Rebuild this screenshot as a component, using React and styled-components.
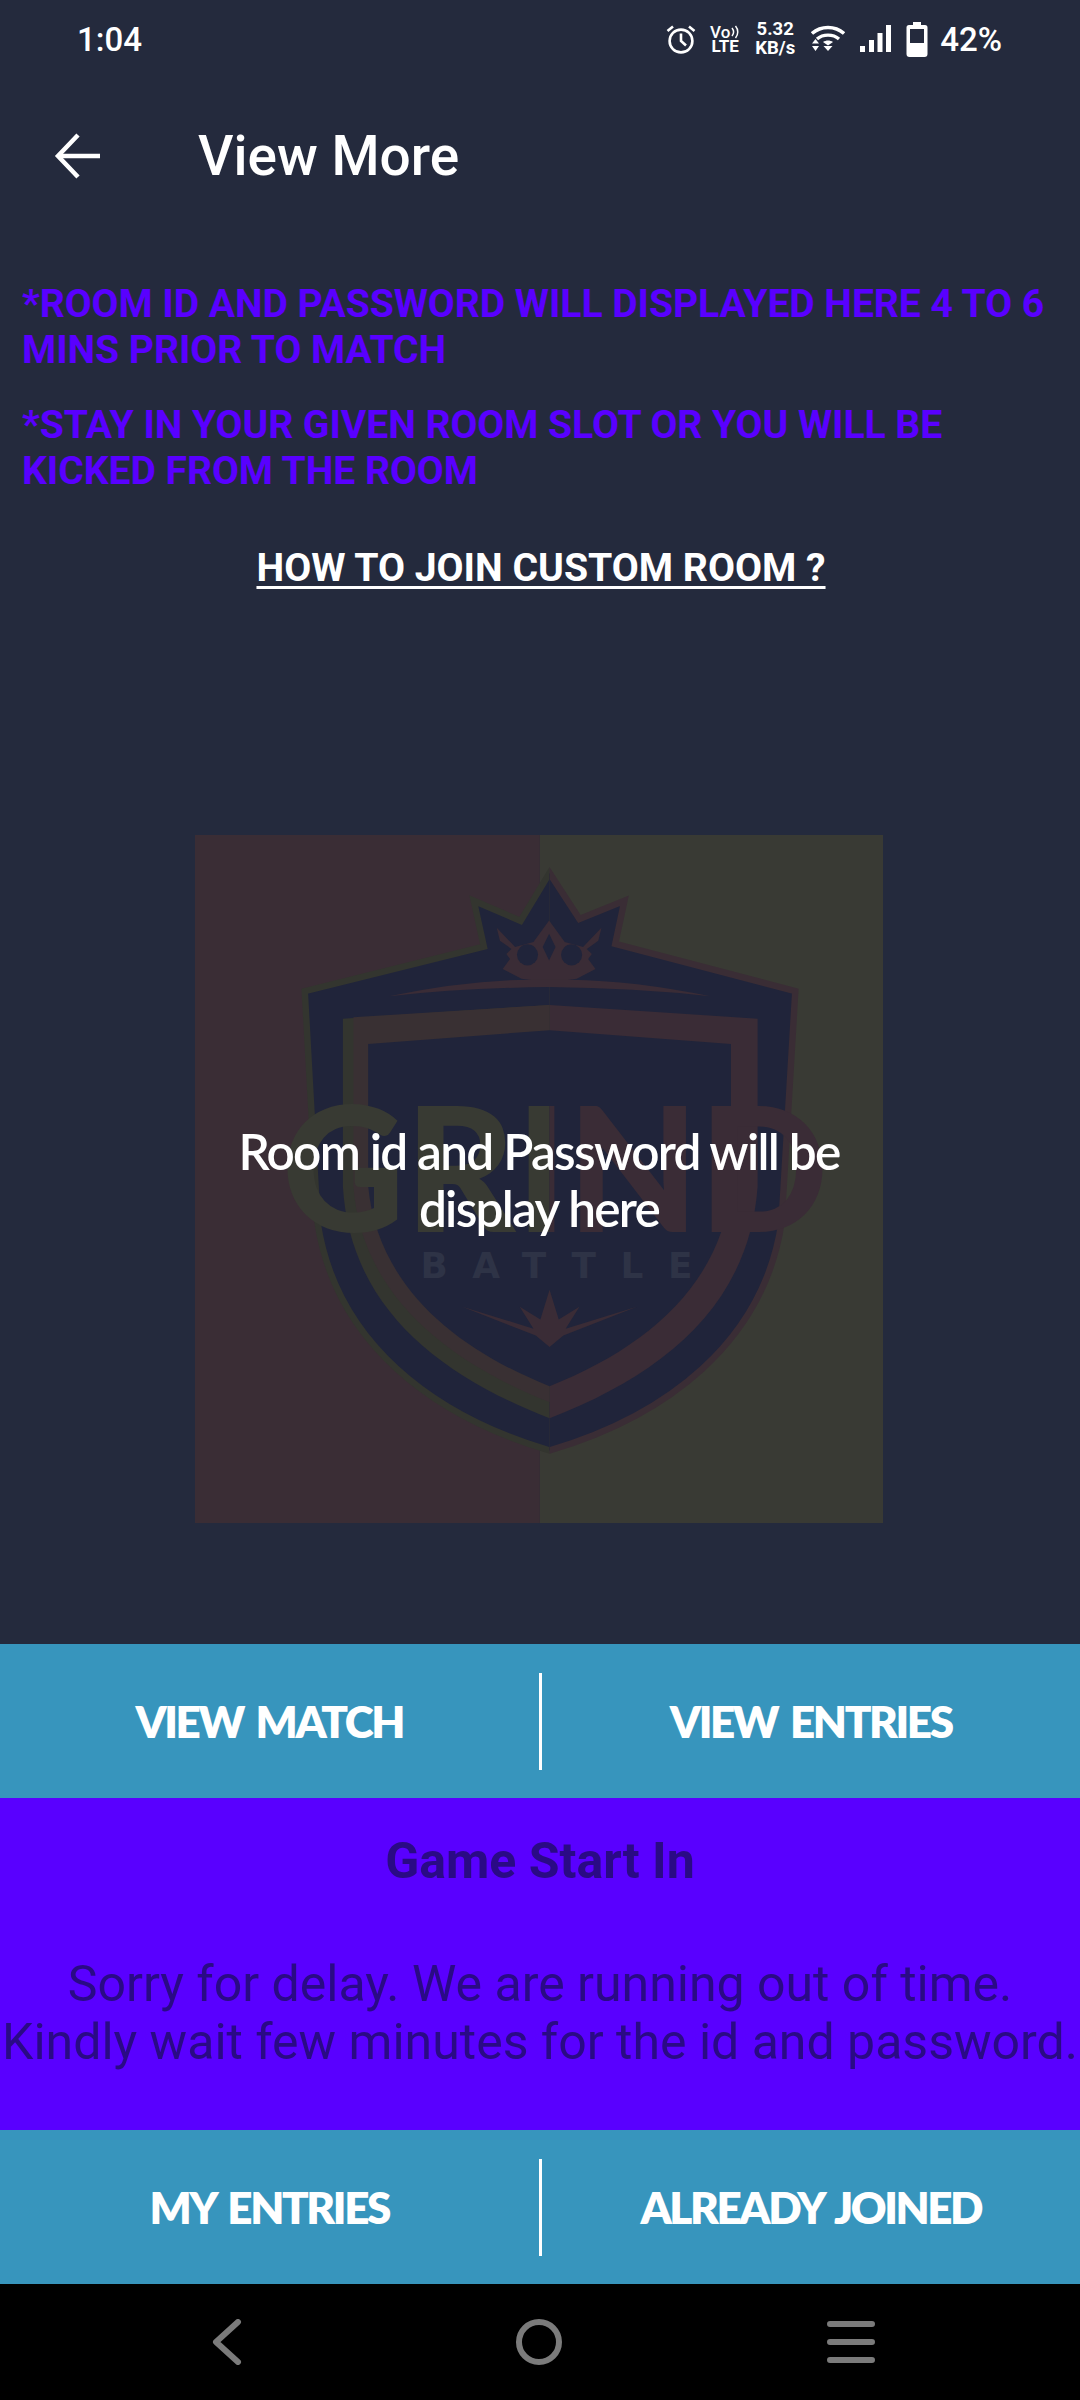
import styled, { createGlobalStyle } from "styled-components";

const GlobalStyle = createGlobalStyle`
    html, body {
        margin: 0;
        padding: 0;
        background: #242A3D;
    }
    * {
        box-sizing: border-box;
    }
`;

const Page = styled.div`
    width: 1080px;
    height: 2400px;
    display: flex;
    flex-direction: column;
    background: #242A3D;
    font-family: "Roboto", sans-serif;
    overflow: hidden;
`;

const StatusBar = styled.div`
    height: 78px;
    display: flex;
    align-items: center;
    justify-content: space-between;
    padding: 0 78px 0 77px;
    color: #fff;
`;

const Clock = styled.span`
    font-size: 33px;
    font-weight: 500;
`;

const StatusIcons = styled.div`
    display: flex;
    align-items: center;
    gap: 15px;
`;

const VoLte = styled.div`
    display: flex;
    flex-direction: column;
    align-items: center;
    font-size: 17px;
    line-height: 14px;
    font-weight: 700;
    width: 28px;
`;

const VoLine = styled.div`
    display: flex;
    align-items: center;
    gap: 1px;
    font-weight: 500;
`;

const Speed = styled.div`
    display: flex;
    flex-direction: column;
    align-items: center;
    font-size: 18.5px;
    line-height: 19px;
    font-weight: 700;
    width: 42px;
`;

const Battery = styled.span`
    font-size: 33px;
    font-weight: 500;
    margin-left: -3px;
`;

const Toolbar = styled.div`
    height: 156px;
    display: flex;
    align-items: center;
    padding: 0 0 0 53px;
    color: #fff;
`;

const ToolbarTitle = styled.h1`
    margin: 0 0 0 97px;
    font-size: 55px;
    font-weight: 500;
    line-height: 64px;
`;

const Notices = styled.div`
    padding: 47px 20px 0 22px;
    display: flex;
    flex-direction: column;
    gap: 29px;
`;

const Notice = styled.p`
    margin: 0;
    font-size: 39px;
    line-height: 46px;
    font-weight: 700;
    color: #5900FF;
`;

const HowToLink = styled.a`
    align-self: center;
    margin-top: 22px;
    font-size: 39.2px;
    line-height: 46px;
    font-weight: 700;
    color: #fff;
    text-decoration: underline;
    text-underline-offset: 5px;
`;

const Content = styled.div`
    flex: 1;
    display: flex;
    flex-direction: column;
`;

const RoomImage = styled.div`
    position: relative;
    width: 688px;
    height: 688px;
    margin: 244px 0 0 195px;
`;

const RoomText = styled.div`
    position: absolute;
    left: -30px;
    right: -30px;
    top: 288px;
    text-align: center;
    font-family: "Lato", sans-serif;
    font-size: 49.5px;
    line-height: 57px;
    font-weight: 600;
    letter-spacing: -1.7px;
    color: #fff;
`;

const ButtonRow = styled.div`
    height: 154px;
    display: flex;
    align-items: center;
    background: #3795BD;
`;

const RowButton = styled.button`
    flex: 1;
    height: 97px;
    border: 0;
    padding: 0;
    background: transparent;
    color: #fff;
    font-family: "Lato", sans-serif;
    font-size: 44px;
    font-weight: 800;
    letter-spacing: -2.4px;
    word-spacing: 5px;
    border-left: ${(props) => (props.$divider ? "3px solid #fff" : "0")};
`;

const TimerPanel = styled.div`
    height: 332px;
    background: #5900FF;
    color: #2A0A85;
    text-align: center;
    padding-top: 30px;
`;

const TimerTitle = styled.h2`
    margin: 0;
    font-size: 50px;
    line-height: 66px;
    font-weight: 700;
`;

const TimerText = styled.p`
    margin: 61px -10px 0;
    font-size: 50px;
    line-height: 58px;
    font-weight: 400;
    white-space: nowrap;
`;

const NavBar = styled.div`
    height: 116px;
    background: #000;
    display: grid;
    grid-template-columns: repeat(3, 312px);
    align-items: center;
    justify-items: center;
    padding-left: 71px;
`;

function AlarmIcon() {
    return (
        <svg width="30" height="30" viewBox="0 0 30 30" fill="none" stroke="#fff" strokeWidth="2.6">
            <circle cx="15" cy="17" r="11.4" />
            <path d="M15 9.5V17l5 4.5" />
            <path d="M1.5 7L7 2.5M28.500 7L23 2.500" />
        </svg>
    );
}

function VoWaves() {
    return (
        <svg width="9" height="14" viewBox="0 0 9 14" fill="none" stroke="#fff" strokeWidth="1.5">
            <path d="M1 3C3 5.500 3 8.500 1 11" />
            <path d="M4.500 1C7.500 4.500 7.500 9.500 4.500 13" />
        </svg>
    );
}

function WifiIcon() {
    return (
        <svg width="34" height="28" viewBox="0 0 34 28" fill="none">
            <g stroke="#fff" strokeWidth="3.400">
                <path d="M1 8.500C10 0.500 24 0.500 33 8.500" />
                <path d="M6 14C12 8.800 22 8.800 28 14" />
            </g>
            <path d="M12 17C15 15 19 15 22 17L17 20.500Z" fill="#fff" />
            <path d="M1 18.500H8L4.500 14ZM1 21H8L4.500 26ZM12.500 21H21.500L17 26Z" fill="#fff" />
        </svg>
    );
}

function SignalIcon() {
    return (
        <svg width="31" height="28" viewBox="0 0 31 28" fill="#fff">
            <rect x="0" y="21" width="5" height="6" />
            <rect x="9" y="15" width="5" height="12" />
            <rect x="17.500" y="8" width="5" height="19" />
            <rect x="26" y="0" width="5" height="27" />
        </svg>
    );
}

function BatteryIcon() {
    return (
        <svg width="22" height="35" viewBox="0 0 22 35" fill="none">
            <path d="M7 0H15V3H19A2.500 2.500 0 0 1 21.500 5.500V32A3 3 0 0 1 18.500 35H3.500A3 3 0 0 1 0.500 32V5.500A2.500 2.500 0 0 1 3 3H7Z" fill="#fff" />
            <rect x="4" y="7" width="14" height="14" fill="#242A3D" />
        </svg>
    );
}

function BackArrow() {
    return (
        <svg width="48" height="46" viewBox="0 0 48 46" fill="none" stroke="#fff" strokeWidth="4.500">
            <path d="M47 23H6" />
            <path d="M25 2L5 23L25 44" />
        </svg>
    );
}

// logo coordinates follow the 3x crop of the picture
function RoomLogo() {
    const outer = "M805 118L870 218L968 178L948 272L1340 375L1310 880C1270 1140 1060 1300 805 1375C550 1300 340 1140 300 880L272 375L662 278L640 178L742 222Z";
    const band = "M355 435L805 405L1258 435L1258 800C1240 1060 1050 1210 805 1305C560 1210 370 1060 355 800Z";
    const bandFace = "M378 432L805 405V1270C590 1185 395 1040 378 800Z";
    const inner = "M410 490L805 460L1200 490L1200 800C1180 1010 1020 1150 805 1235C590 1150 430 1010 410 800Z";
    const crown = "M804 221L838 268L878 279L918 237L911 265L886 283L897 294L889 305L905 327L864 348L806 356L744 348L703 327L719 305L711 294L722 283L697 265L690 237L730 279L770 268Z";
    const crownArc = "M455 386Q620 352 760 350H850Q990 352 1155 386Q990 368 805 366Q620 368 455 386Z";
    return (
        <svg width="688" height="688" viewBox="33 35 1498 1498">
            <defs>
                <clipPath id="leftHalf"><rect x="33" y="35" width="772" height="1498" /></clipPath>
                <clipPath id="rightHalf"><rect x="805" y="35" width="726" height="1498" /></clipPath>
            </defs>
            <rect x="33" y="35" width="751" height="1498" fill="#3A2D35" />
            <rect x="784" y="35" width="747" height="1498" fill="#393A34" />
            <path d={outer} fill="#20243A" stroke="#33352F" strokeWidth="14" clipPath="url(#leftHalf)" />
            <path d={outer} fill="#20243A" stroke="#3A2D35" strokeWidth="14" clipPath="url(#rightHalf)" />
            <path d={band} fill="#33352F" clipPath="url(#leftHalf)" />
            <path d={band} fill="#3A2C36" clipPath="url(#rightHalf)" />
            <path d={bandFace} fill="#393033" />
            <path d={inner} fill="#20243A" />
            <path d={crown} fill="#3A2C36" />
            <circle cx="757" cy="296" r="23" fill="#20243A" />
            <circle cx="853" cy="296" r="23" fill="#20243A" />
            <path d="M804 250L818 279L804 308L790 279Z" fill="#20243A" />
            <path d={crownArc} fill="#3A2C36" />
            <path d="M805 1025L825 1090L870 1062L840 1110L995 1062L835 1125L805 1150L775 1125L615 1062L770 1110L740 1062L785 1090Z" fill="#3A2C36" />
            <text x="222" y="899" fontFamily="Lato, sans-serif" fontSize="378" fontWeight="900" textLength="1190" lengthAdjust="spacingAndGlyphs" fill="#383A33" clipPath="url(#leftHalf)">GRIND</text>
            <text x="222" y="899" fontFamily="Lato, sans-serif" fontSize="378" fontWeight="900" textLength="1190" lengthAdjust="spacingAndGlyphs" fill="#3A2C36" clipPath="url(#rightHalf)">GRIND</text>
            <text x="524" y="1000" fontFamily="DejaVu Sans, sans-serif" fontSize="78" fontWeight="700" textLength="592" fill="#2E3346">BATTLE</text>
        </svg>
    );
}

export default function App() {
    return (
        <Page>
            <GlobalStyle />
            <StatusBar>
                <Clock>1:04</Clock>
                <StatusIcons>
                    <AlarmIcon />
                    <VoLte>
                        <VoLine>Vo<VoWaves /></VoLine>
                        <span>LTE</span>
                    </VoLte>
                    <Speed>
                        <span>5.32</span>
                        <span>KB/s</span>
                    </Speed>
                    <WifiIcon />
                    <SignalIcon />
                    <BatteryIcon />
                    <Battery>42%</Battery>
                </StatusIcons>
            </StatusBar>

            <Toolbar>
                <BackArrow />
                <ToolbarTitle>View More</ToolbarTitle>
            </Toolbar>

            <Content>
                <Notices>
                    <Notice>*ROOM ID AND PASSWORD WILL DISPLAYED HERE 4 TO 6 MINS PRIOR TO MATCH</Notice>
                    <Notice>*STAY IN YOUR GIVEN ROOM SLOT OR YOU WILL BE KICKED FROM THE ROOM</Notice>
                    <HowToLink>HOW TO JOIN CUSTOM ROOM ?</HowToLink>
                </Notices>
                <RoomImage>
                    <RoomLogo />
                    <RoomText>Room id and Password will be<br />display here</RoomText>
                </RoomImage>
            </Content>

            <ButtonRow>
                <RowButton>VIEW MATCH</RowButton>
                <RowButton $divider>VIEW ENTRIES</RowButton>
            </ButtonRow>

            <TimerPanel>
                <TimerTitle>Game Start In</TimerTitle>
                <TimerText>Sorry for delay. We are running out of time.<br />Kindly wait few minutes for the id and password.</TimerText>
            </TimerPanel>

            <ButtonRow>
                <RowButton>MY ENTRIES</RowButton>
                <RowButton $divider>ALREADY JOINED</RowButton>
            </ButtonRow>

            <NavBar>
                <svg width="32" height="46" viewBox="0 0 32 46" fill="none" stroke="#7B7B7B" strokeWidth="6" strokeLinecap="round" strokeLinejoin="round">
                    <path d="M27 3L5 23L27 43" />
                </svg>
                <svg width="48" height="48" viewBox="0 0 48 48" fill="none" stroke="#7B7B7B" strokeWidth="6">
                    <circle cx="24" cy="24" r="20" />
                </svg>
                <svg width="48" height="42" viewBox="0 0 48 42" fill="none" stroke="#7B7B7B" strokeWidth="6" strokeLinecap="round">
                    <path d="M3 3H45M3 21H45M3 39H45" />
                </svg>
            </NavBar>
        </Page>
    );
}
